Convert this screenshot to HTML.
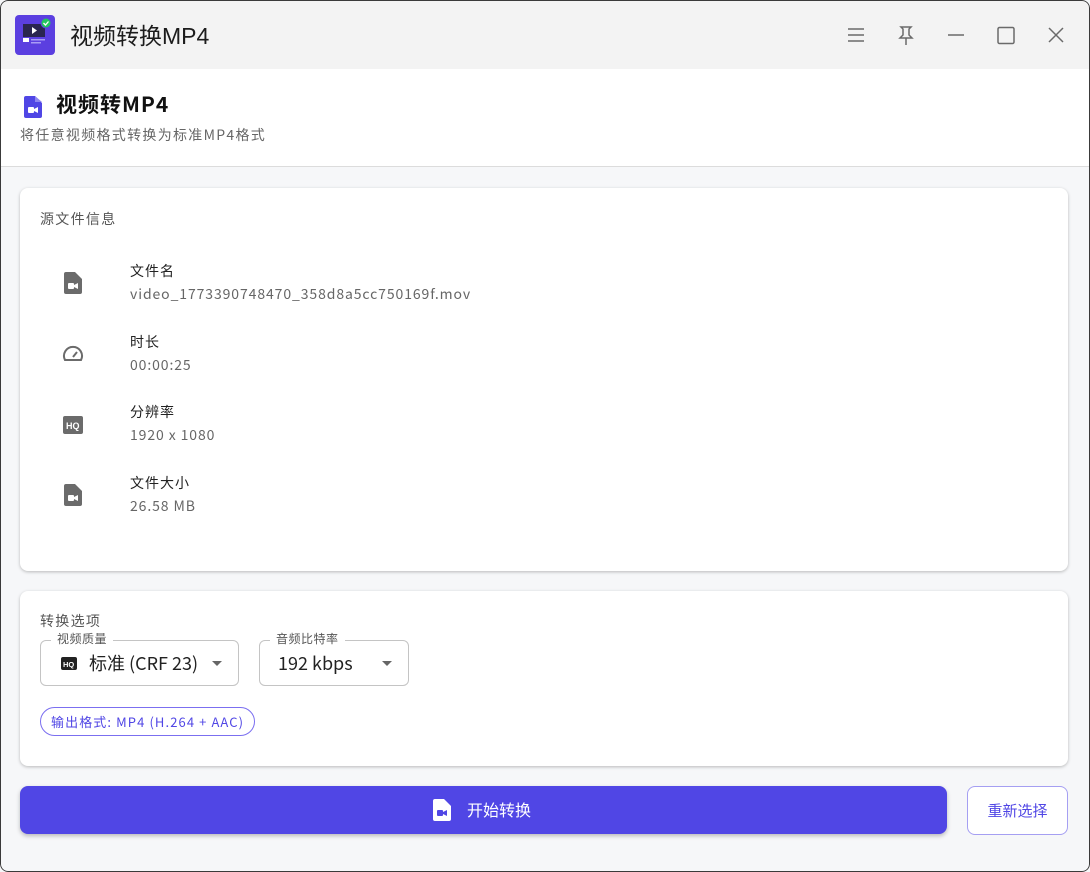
<!DOCTYPE html>
<html><head><meta charset="utf-8"><style>
*{box-sizing:border-box;margin:0;padding:0}
body{width:1090px;height:872px;overflow:hidden;font-family:"Noto Sans CJK SC","Liberation Sans",sans-serif;background:#f5f6f8;position:relative;color:#222}
.win{position:absolute;inset:0;border-radius:8px;overflow:hidden;background:#f6f7f9}
.frame{position:absolute;inset:0;border:1px solid #3a3a3a;border-radius:8px;pointer-events:none;z-index:9}
.tb{position:absolute;left:0;top:0;right:0;height:69px;background:#f3f3f3}
.logo{position:absolute;left:15px;top:15px;width:40px;height:40px;border-radius:4px;background:#5b3fe0}
.tt{position:absolute;left:70px;top:17px;font-size:23px;color:#1c1c1c;font-family:"Liberation Sans","Noto Sans CJK SC",sans-serif}
.hdr{position:absolute;left:0;right:0;top:69px;height:98px;background:#fff;border-bottom:1px solid #dcdcdc}
.h1{position:absolute;left:56px;top:20px;font-size:21px;font-weight:bold;color:#111;letter-spacing:1px}
.sub{position:absolute;left:20px;top:56px;font-size:14px;color:#666;letter-spacing:1.3px}
.card{position:absolute;left:20px;right:22px;background:#fff;border-radius:8px;box-shadow:0 1px 3px rgba(0,0,0,.25)}
.lbl{position:absolute;font-size:14px;color:#555;letter-spacing:1.3px}
.k{position:absolute;left:110px;font-size:14px;color:#222;letter-spacing:1px}
.v{position:absolute;left:110px;font-size:14px;color:#666;letter-spacing:0.9px}
.sel{position:absolute;height:46px;border:1px solid #c4c4c4;border-radius:6px;top:49px}
.sel .leg{position:absolute;top:-11px;left:10px;background:#fff;padding:0 6px;font-size:12px;color:#555;letter-spacing:.5px}
.sel .t{position:absolute;top:9px;font-size:18px;color:#222}
.arr{position:absolute;top:20px;width:0;height:0;border-left:5px solid transparent;border-right:5px solid transparent;border-top:5px solid #666}
.chip{position:absolute;left:20px;top:116px;height:29px;border:1px solid #7b6ff0;border-radius:15px;padding:0 10px;line-height:27px;font-size:13px;color:#5046e5;letter-spacing:1.1px}
.btn{position:absolute;left:20px;top:786px;width:927px;height:48px;background:#5046e5;border-radius:8px;box-shadow:0 2px 4px rgba(0,0,0,.25);color:#fff;font-size:16px}
.btn2{position:absolute;left:967px;top:786px;width:101px;height:49px;border:1px solid #a59ff2;border-radius:8px;color:#5046e5;font-size:15px;text-align:center;line-height:47px;background:#fff}
</style></head><body><div class="win">
<div class="tb">
<div class="logo"><svg width="40" height="40"><rect x="8" y="9" width="22" height="13" fill="#2a2550"/><path d="M17 12l5 3.5-5 3.5z" fill="#fff"/><rect x="8" y="23" width="6" height="4" fill="#fff"/><rect x="16" y="24" width="14" height="1.5" fill="#a99cf5"/><rect x="16" y="27" width="10" height="1.5" fill="#a99cf5"/><circle cx="31" cy="8" r="5" fill="#22c55e" stroke="#5b3fe0" stroke-width="1"/><path d="M28.5 8l2 2 3-3.5" stroke="#fff" stroke-width="1.3" fill="none"/></svg></div>
<div class="tt">视频转换MP4</div>
<svg style="position:absolute;left:846px;top:26px" width="220" height="20" fill="none" stroke="#6a6a6a" stroke-width="1.5">
<path d="M2 3h16M2 9h16M2 15h16"/>
<path d="M55 1h10l-2 2v6l3 3H54l3-3V3zM60 12v7"/>
<path d="M102 9h16"/>
<rect x="152" y="1.5" width="16" height="16" rx="1.5"/>
<path d="M203 2l14 14M217 2L203 16"/>
</svg>
</div>
<div class="hdr">
<svg style="position:absolute;left:24px;top:27px" width="18" height="22"><path d="M2 0h9l7 7v13a2 2 0 0 1-2 2H2a2 2 0 0 1-2-2V2a2 2 0 0 1 2-2z" fill="#5046e5"/><path d="M11 0v6h7" fill="#8e86f0"/><rect x="4" y="11" width="6" height="6" rx="1" fill="#fff"/><path d="M10 13l4-2v6l-4-2z" fill="#fff"/></svg>
<div class="h1">视频转MP4</div>
<div class="sub">将任意视频格式转换为标准MP4格式</div>
</div>
<div class="card" style="top:188px;height:383px">
<div class="lbl" style="left:20px;top:21px">源文件信息</div>
<svg style="position:absolute;left:44px;top:84px" width="18" height="22"><path d="M2 0h9l7 7v13a2 2 0 0 1-2 2H2a2 2 0 0 1-2-2V2a2 2 0 0 1 2-2z" fill="#6b6b6b"/><rect x="4" y="11" width="6" height="6" rx="1" fill="#fff"/><path d="M10 13l4-2v6l-4-2z" fill="#fff"/></svg>
<div class="k" style="top:73px">文件名</div><div class="v" style="top:96px">video_1773390748470_358d8a5cc750169f.mov</div>
<svg style="position:absolute;left:42px;top:157px" width="22" height="18" fill="none" stroke="#6b6b6b" stroke-width="2"><path d="M3 15a9 9 0 1 1 16 0z"/><path d="M11 12l4-5" /></svg>
<div class="k" style="top:144px">时长</div><div class="v" style="top:167px">00:00:25</div>
<svg style="position:absolute;left:43px;top:228px" width="20" height="18"><rect width="20" height="18" rx="2" fill="#6b6b6b"/><text x="3" y="13" font-size="9" font-weight="bold" fill="#fff" font-family="Liberation Sans">HQ</text></svg>
<div class="k" style="top:214px">分辨率</div><div class="v" style="top:237px">1920 x 1080</div>
<svg style="position:absolute;left:44px;top:296px" width="18" height="22"><path d="M2 0h9l7 7v13a2 2 0 0 1-2 2H2a2 2 0 0 1-2-2V2a2 2 0 0 1 2-2z" fill="#6b6b6b"/><rect x="4" y="11" width="6" height="6" rx="1" fill="#fff"/><path d="M10 13l4-2v6l-4-2z" fill="#fff"/></svg>
<div class="k" style="top:285px">文件大小</div><div class="v" style="top:308px">26.58 MB</div>
</div>
<div class="card" style="top:591px;height:175px">
<div class="lbl" style="left:20px;top:20px">转换选项</div>
<div class="sel" style="left:20px;width:199px"><span class="leg">视频质量</span>
<svg style="position:absolute;left:20px;top:16px" width="16" height="13"><rect width="16" height="13" rx="2" fill="#222"/><text x="2" y="10" font-size="7.5" font-weight="bold" fill="#fff" font-family="Liberation Sans">HQ</text></svg>
<span class="t" style="left:48px">标准 (CRF 23)</span><span class="arr" style="left:171px"></span></div>
<div class="sel" style="left:239px;width:150px"><span class="leg">音频比特率</span><span class="t" style="left:18px">192 kbps</span><span class="arr" style="left:122px"></span></div>
<div class="chip">输出格式: MP4 (H.264 + AAC)</div>
</div>
<div class="btn"><svg style="position:absolute;left:413px;top:13px" width="18" height="22"><path d="M2 0h9l7 7v13a2 2 0 0 1-2 2H2a2 2 0 0 1-2-2V2a2 2 0 0 1 2-2z" fill="#fff"/><rect x="4" y="11" width="6" height="6" rx="1" fill="#5046e5"/><path d="M10 13l4-2v6l-4-2z" fill="#5046e5"/></svg><span style="position:absolute;left:447px;top:11px">开始转换</span></div>
<div class="btn2">重新选择</div>
<div class="frame"></div>
</div></body></html>
